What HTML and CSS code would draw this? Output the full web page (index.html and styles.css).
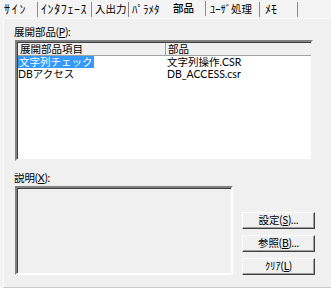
FILE: index.html
```html
<!DOCTYPE html>
<html lang="ja">
  <head>
    <meta charset="UTF-8" />
    <title>部品</title>
    <link rel="stylesheet" href="styles.css">
  </head>
  <body>
    <div class="tabs">
      <span class="tab t1">ｻｲﾝ</span>
      <span class="tab t2">ｲﾝﾀﾌｪｰｽ</span>
      <span class="tab t3">入出力</span>
      <span class="tab t4">ﾊﾟﾗﾒﾀ</span>
      <span class="tab t5 active">部品</span>
      <span class="tab t6">ﾕｰｻﾞ処理</span>
      <span class="tab t7">ﾒﾓ</span>
    </div>

    <div class="panel">
      <div class="label">展開部品(<u>P</u>):</div>
      <div class="list">
        <div class="list-head">
          <div class="col1">展開部品項目</div>
          <div class="col2">部品</div>
        </div>
        <div class="row">
          <div class="col1"><span class="selected">文字列チェック</span></div>
          <div class="col2">文字列操作.CSR</div>
        </div>
        <div class="row">
          <div class="col1">DBアクセス</div>
          <div class="col2">DB_ACCESS.csr</div>
        </div>
      </div>

      <div class="bottom">
        <div class="desc-col">
          <div class="label">説明(<u>X</u>):</div>
          <div class="desc"></div>
        </div>
        <div class="buttons">
          <button>設定(<u>S</u>)...</button>
          <button>参照(<u>B</u>)...</button>
          <button>ｸﾘｱ(<u>L</u>)</button>
        </div>
      </div>
    </div>
  </body>
</html>
```

FILE: styles.css
```css
body {
  margin: 0;
  width: 331px;
  height: 288px;
  background-color: #f4f4f4;
  font-family: Lato, "Noto Sans CJK JP", sans-serif;
  font-size: 10.5px;
  color: #000;
  overflow: hidden;
}
.tabs {
  display: flex;
  height: 18px;
  align-items: flex-start;
}
.tab {
  height: 15px;
  line-height: 15px;
  margin-top: 2px;
  padding-left: 3px;
  border-right: 1px solid #8a8a8a;
  white-space: nowrap;
  box-sizing: border-box;
}
.t1 { width: 38px; padding-left: 4px; font-size: 12px; letter-spacing: 1.7px; }
.t2 { width: 54px; font-size: 12px; letter-spacing: 0.6px; }
.t3 { width: 37px; }
.t4 { width: 39px; border-right: none; font-size: 11px; }
.t5 { width: 38px; padding-left: 5px; }
.t6 { width: 54px; padding-left: 4px; }
.t7 { width: 38px; padding-left: 5px; font-size: 12px; }
.tab.active {
  margin-top: 1px;
  font-weight: 500;
}
.panel {
  margin-left: 3px;
  width: 321px;
  height: 262px;
  background-color: #f0f0f0;
  border: 1px solid #fafafa;
  border-right-color: #c8c8c8;
  border-bottom-color: #c8c8c8;
  padding: 6px 0 0 10px;
  box-sizing: content-box;
}
.label {
  height: 14px;
  line-height: 14px;
  white-space: nowrap;
}
.list {
  margin: 1px 0 0 1px;
  width: 294px;
  height: 117px;
  background: #fff;
  border: 2px solid;
  border-color: #808080 #f0f0f0 #f0f0f0 #808080;
  box-shadow: inset 1px 1px 0 #404040;
}
.list-head {
  display: flex;
  height: 12px;
  line-height: 12px;
  background: #f0f0f0;
  border-bottom: 1px solid #a0a0a0;
  margin: 1px 0 0 1px;
}
.list-head .col1 {
  border-right: 1px solid #a0a0a0;
}
.row {
  display: flex;
  height: 12px;
  line-height: 12px;
}
.col1 {
  width: 145px;
  padding-left: 2px;
  white-space: nowrap;
}
.row .col1 {
  padding-left: 1px;
  width: 147px;
}
.col2 {
  padding-left: 2px;
  white-space: nowrap;
}
.selected {
  background: #3399ff;
  color: #fff;
  padding: 0 1px;
}
.bottom {
  display: flex;
  align-items: flex-end;
  margin-top: 10px;
}
.desc-col {
  display: flex;
  flex-direction: column;
  gap: 1px;
}
.desc {
  margin-left: 1px;
  width: 214px;
  height: 85px;
  border: 2px solid;
  border-color: #808080 #fff #fff #808080;
  box-shadow: inset 1px 1px 0 #404040;
  background: #f0f0f0;
}
.buttons {
  display: flex;
  flex-direction: column;
  gap: 6px;
  margin-left: 9px;
}
button {
  width: 73px;
  height: 17px;
  padding: 0;
  font-family: inherit;
  font-size: 10.5px;
  line-height: 13px;
  background: #f0f0f0;
  color: #000;
  border: 1px solid;
  border-color: #fff #404040 #404040 #fff;
  box-shadow: inset -1px -1px 0 #a0a0a0;
}
```
